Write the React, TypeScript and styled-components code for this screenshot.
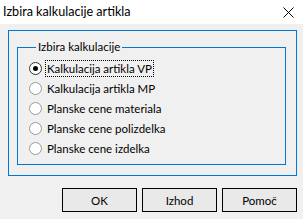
import React, {FC, useState} from 'react';
import styled, {createGlobalStyle, css} from 'styled-components';

const blue = '#0078d7';
const face = '#f0f0f0';
const font = `Lato, 'Noto Sans', sans-serif`;

const GlobalStyle = createGlobalStyle`
  html, body {
    margin: 0;
    padding: 0;
    background: ${face};
  }
  body {
    font-family: ${font};
    color: #000;
  }
`;

const Window = styled.div`
  width: 303px;
  height: 219px;
  display: flex;
  flex-direction: column;
  background: ${face};
  overflow: hidden;
`;

const TitleBar = styled.div`
  height: 24px;
  flex: none;
  display: flex;
  align-items: center;
  justify-content: space-between;
  background: #fff;
`;

const Title = styled.div`
  padding-left: 3px;
  font-size: 12.6px;
  line-height: 16px;
`;

const CloseBox = styled.div`
  width: 30px;
  height: 24px;
  display: flex;
  align-items: center;
  justify-content: center;
`;

const Content = styled.div`
  flex: 1;
  display: flex;
  flex-direction: column;
  padding: 6px 6px 7px 8px;
`;

const Panel = styled.div`
  height: 146px;
  box-sizing: border-box;
  border: 1px solid ${blue};
  padding: 9px 10px 10px 8px;
  margin-bottom: 12px;
  display: flex;
`;

const Group = styled.fieldset`
  flex: 1;
  margin: 0;
  min-width: 0;
  border: 1px solid ${blue};
  padding: 4px 0 0 11px;
`;

const Legend = styled.legend`
  margin-left: 7px;
  padding: 0 2px;
  font-size: 11.5px;
  line-height: 14px;
`;

const Row = styled.label`
  height: 20px;
  display: flex;
  align-items: center;
  font-size: 11.5px;
`;

const Circle = styled.span<{$on: boolean}>`
  width: 13px;
  height: 13px;
  box-sizing: border-box;
  border-radius: 50%;
  border: 1px solid ${p => (p.$on ? '#333' : '#999')};
  background: #fff;
  display: flex;
  align-items: center;
  justify-content: center;
  margin-right: 3px;
  ${p =>
    p.$on &&
    css`
      &::after {
        content: '';
        width: 5px;
        height: 5px;
        border-radius: 50%;
        background: #000;
      }
    `}
`;

const Text = styled.span<{$focus: boolean}>`
  padding: 0 1px;
  height: 15px;
  line-height: 15px;
  border: 1px dotted ${p => (p.$focus ? '#000' : 'transparent')};
`;

const Buttons = styled.div`
  display: flex;
  justify-content: flex-end;
  gap: 5px;
`;

const Button = styled.button`
  width: 75px;
  height: 24px;
  box-sizing: border-box;
  border: 1px solid #000;
  background: #e9e9e9;
  font-family: ${font};
  font-size: 11.5px;
  font-weight: 400;
  color: #000;
  padding: 0;
`;

const Close: FC = () => (
  <svg width="11" height="11" viewBox="0 0 11 11">
    <path d="M0.5 0.5 L10.5 10.5 M10.5 0.5 L0.5 10.5" stroke="#000" strokeWidth="1" fill="none"/>
  </svg>
);

const options = [
  'Kalkulacija artikla VP',
  'Kalkulacija artikla MP',
  'Planske cene materiala',
  'Planske cene polizdelka',
  'Planske cene izdelka',
];

export default function App() {
  const [sel, setSel] = useState(0);
  return (
    <Window>
      <GlobalStyle/>
      <TitleBar>
        <Title>Izbira kalkulacije artikla</Title>
        <CloseBox><Close/></CloseBox>
      </TitleBar>
      <Content>
        <Panel>
          <Group>
            <Legend>Izbira kalkulacije</Legend>
            {options.map((o, i) => (
              <Row key={o} onClick={() => setSel(i)}>
                <Circle $on={sel === i}/>
                <Text $focus={sel === i}>{o}</Text>
              </Row>
            ))}
          </Group>
        </Panel>
        <Buttons>
          <Button>OK</Button>
          <Button>Izhod</Button>
          <Button>Pomoč</Button>
        </Buttons>
      </Content>
    </Window>
  );
}
